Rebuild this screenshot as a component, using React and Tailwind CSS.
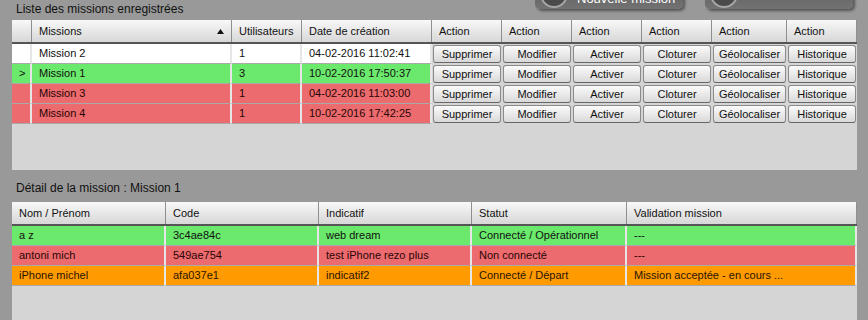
import React from 'react'

const missions = [
  { name: 'Mission 2', users: '1', date: '04-02-2016 11:02:41', color: 'bg-white', text: 'text-[#111]' },
  { name: 'Mission 1', users: '3', date: '10-02-2016 17:50:37', color: 'bg-[#6ae96c]', text: 'text-[#111]', selected: true },
  { name: 'Mission 3', users: '1', date: '04-02-2016 11:03:00', color: 'bg-[#ec6b6e]', text: 'text-[#2a0505]' },
  { name: 'Mission 4', users: '1', date: '10-02-2016 17:42:25', color: 'bg-[#ec6b6e]', text: 'text-[#2a0505]' },
]

const actions = ['Supprimer', 'Modifier', 'Activer', 'Cloturer', 'Géolocaliser', 'Historique']

const members = [
  { name: 'a z', code: '3c4ae84c', call: 'web dream', status: 'Connecté / Opérationnel', valid: '---', color: 'bg-[#6ae96c]', text: 'text-[#111]' },
  { name: 'antoni mich', code: '549ae754', call: 'test iPhone rezo plus', status: 'Non connecté', valid: '---', color: 'bg-[#ec6b6e]', text: 'text-[#2a0505]' },
  { name: 'iPhone michel', code: 'afa037e1', call: 'indicatif2', status: 'Connecté / Départ', valid: 'Mission acceptée - en cours ...', color: 'bg-[#ff9a00]', text: 'text-[#2a1400]' },
]

const Head = ({ children, className = '' }) => (
  <div
    className={`h-[22px] leading-[22px] pl-[7px] border-r border-[#8f8f8f] bg-gradient-to-b from-[#f8f8f8] to-[#d7d7d7] truncate ${className}`}
  >
    {children}
  </div>
)

const Cell = ({ children, className = '' }) => (
  <div
    className={`h-[20px] leading-[19px] pl-[7px] border-r-2 border-r-[#e6e6e6] border-b border-b-[#a9a9a9] truncate ${className}`}
  >
    {children}
  </div>
)

const TopButton = ({ label }) => (
  <div className="w-[148px] h-[30px] -mt-[21px] flex items-center pl-[5px] gap-[9px] rounded-[5px] bg-gradient-to-b from-[#5c5c5c] to-[#727272] shadow-[2px_2px_3px_rgba(0,0,0,0.45)]">
    <div className="w-[28px] h-[28px] rounded-full bg-[#4a4a4a] border-2 border-[#a5a5a5]" />
    <span className="pt-[9px] text-[13px] leading-[13px] text-white">{label}</span>
  </div>
)

const App = () => {
  return (
    <div className="w-[868px] h-[320px] overflow-hidden bg-[#999999] flex flex-col text-[11px] text-[#111] font-['Liberation_Sans',Arial,sans-serif]">
      <header className="h-[20px] flex items-start">
        <h1 className="flex-1 pl-[16px] text-[12px] leading-[18px] text-[#111]">Liste des missions enregistrées</h1>
        <div className="flex gap-[22px] pr-[15px]">
          <TopButton label="Nouvelle mission" />
          <TopButton label="" />
        </div>
      </header>

      <section className="ml-[12px] w-[845px] h-[150px] bg-[#d5d5d5]">
        <div className="grid grid-cols-[20px_200px_70px_130px_70px_70px_70px_70px_75px_70px] border-b-2 border-[#555]">
          <Head />
          <Head className="flex items-center justify-between pr-[7px]">
            <span>Missions</span>
            <svg width="7" height="5" viewBox="0 0 7 5">
              <polygon points="0,5 3.5,0 7,5" fill="#111" />
            </svg>
          </Head>
          <Head>Utilisateurs</Head>
          <Head>Date de création</Head>
          {actions.map((a) => (
            <Head key={a}>Action</Head>
          ))}
        </div>

        {missions.map((m) => (
          <div key={m.name} className="grid grid-cols-[20px_200px_70px_130px_70px_70px_70px_70px_75px_70px]">
            <Cell className={`${m.color} ${m.text}`}>{m.selected ? '>' : ''}</Cell>
            <Cell className={`${m.color} ${m.text}`}>{m.name}</Cell>
            <Cell className={`${m.color} ${m.text}`}>{m.users}</Cell>
            <Cell className={`${m.color} ${m.text}`}>{m.date}</Cell>
            {actions.map((a) => (
              <div key={a} className="h-[20px] p-[1px]">
                <button className="w-full h-[18px] leading-[16px] rounded-[3px] border border-[#8a8a8a] border-b-[#666] bg-gradient-to-b from-[#fbfbfb] to-[#d9d9d9] text-[11px] text-[#111]">
                  {a}
                </button>
              </div>
            ))}
          </div>
        ))}
      </section>

      <h2 className="h-[32px] pl-[16px] text-[12px] leading-[36px] text-[#111]">Détail de la mission : Mission 1</h2>

      <section className="ml-[12px] w-[845px] flex-1 bg-[#d5d5d5]">
        <div className="grid grid-cols-[154px_153px_153px_155px_230px] border-b-2 border-[#555]">
          <Head>Nom / Prénom</Head>
          <Head>Code</Head>
          <Head>Indicatif</Head>
          <Head>Statut</Head>
          <Head>Validation mission</Head>
        </div>
        {members.map((p) => (
          <div key={p.name} className="grid grid-cols-[154px_153px_153px_155px_230px]">
            <Cell className={`${p.color} ${p.text}`}>{p.name}</Cell>
            <Cell className={`${p.color} ${p.text}`}>{p.code}</Cell>
            <Cell className={`${p.color} ${p.text}`}>{p.call}</Cell>
            <Cell className={`${p.color} ${p.text}`}>{p.status}</Cell>
            <Cell className={`${p.color} ${p.text}`}>{p.valid}</Cell>
          </div>
        ))}
      </section>
    </div>
  )
}

export default App
